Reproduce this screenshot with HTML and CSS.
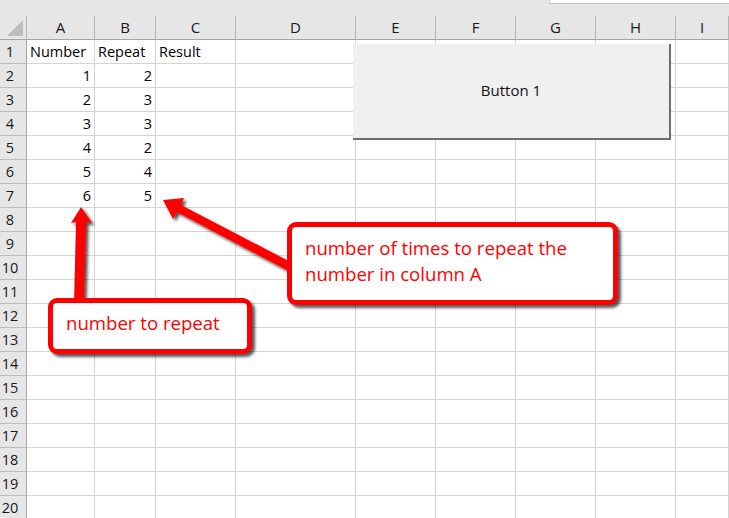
FILE: index.html
```html
<!DOCTYPE html>
<html>
<head>
<meta charset="utf-8">
<link rel="stylesheet" href="styles.css">
</head>
<body>
<div class="sheet">
  <div class="topbar"><div class="formula"></div></div>
  <div class="row head">
    <div class="corner"><svg class="corner-mark" width="26" height="23" viewBox="0 0 26 23"><polygon points="23,4 23,20 7,20" fill="#bdbdbd"/></svg></div>
    <div class="ch">A</div><div class="ch">B</div><div class="ch">C</div><div class="ch">D</div><div class="ch">E</div><div class="ch">F</div><div class="ch">G</div><div class="ch">H</div><div class="ch">I</div>
  </div>
  <div class="row"><div class="rh">1</div><div class="c">Number</div><div class="c">Repeat</div><div class="c">Result</div><div class="c"></div><div class="c"></div><div class="c"></div><div class="c"></div><div class="c"></div><div class="c"></div></div>
  <div class="row"><div class="rh">2</div><div class="c n">1</div><div class="c n">2</div><div class="c"></div><div class="c"></div><div class="c"></div><div class="c"></div><div class="c"></div><div class="c"></div><div class="c"></div></div>
  <div class="row"><div class="rh">3</div><div class="c n">2</div><div class="c n">3</div><div class="c"></div><div class="c"></div><div class="c"></div><div class="c"></div><div class="c"></div><div class="c"></div><div class="c"></div></div>
  <div class="row"><div class="rh">4</div><div class="c n">3</div><div class="c n">3</div><div class="c"></div><div class="c"></div><div class="c"></div><div class="c"></div><div class="c"></div><div class="c"></div><div class="c"></div></div>
  <div class="row"><div class="rh">5</div><div class="c n">4</div><div class="c n">2</div><div class="c"></div><div class="c"></div><div class="c"></div><div class="c"></div><div class="c"></div><div class="c"></div><div class="c"></div></div>
  <div class="row"><div class="rh">6</div><div class="c n">5</div><div class="c n">4</div><div class="c"></div><div class="c"></div><div class="c"></div><div class="c"></div><div class="c"></div><div class="c"></div><div class="c"></div></div>
  <div class="row"><div class="rh">7</div><div class="c n">6</div><div class="c n">5</div><div class="c"></div><div class="c"></div><div class="c"></div><div class="c"></div><div class="c"></div><div class="c"></div><div class="c"></div></div>
  <div class="row"><div class="rh">8</div><div class="c"></div><div class="c"></div><div class="c"></div><div class="c"></div><div class="c"></div><div class="c"></div><div class="c"></div><div class="c"></div><div class="c"></div></div>
  <div class="row"><div class="rh">9</div><div class="c"></div><div class="c"></div><div class="c"></div><div class="c"></div><div class="c"></div><div class="c"></div><div class="c"></div><div class="c"></div><div class="c"></div></div>
  <div class="row"><div class="rh">10</div><div class="c"></div><div class="c"></div><div class="c"></div><div class="c"></div><div class="c"></div><div class="c"></div><div class="c"></div><div class="c"></div><div class="c"></div></div>
  <div class="row"><div class="rh">11</div><div class="c"></div><div class="c"></div><div class="c"></div><div class="c"></div><div class="c"></div><div class="c"></div><div class="c"></div><div class="c"></div><div class="c"></div></div>
  <div class="row"><div class="rh">12</div><div class="c"></div><div class="c"></div><div class="c"></div><div class="c"></div><div class="c"></div><div class="c"></div><div class="c"></div><div class="c"></div><div class="c"></div></div>
  <div class="row"><div class="rh">13</div><div class="c"></div><div class="c"></div><div class="c"></div><div class="c"></div><div class="c"></div><div class="c"></div><div class="c"></div><div class="c"></div><div class="c"></div></div>
  <div class="row"><div class="rh">14</div><div class="c"></div><div class="c"></div><div class="c"></div><div class="c"></div><div class="c"></div><div class="c"></div><div class="c"></div><div class="c"></div><div class="c"></div></div>
  <div class="row"><div class="rh">15</div><div class="c"></div><div class="c"></div><div class="c"></div><div class="c"></div><div class="c"></div><div class="c"></div><div class="c"></div><div class="c"></div><div class="c"></div></div>
  <div class="row"><div class="rh">16</div><div class="c"></div><div class="c"></div><div class="c"></div><div class="c"></div><div class="c"></div><div class="c"></div><div class="c"></div><div class="c"></div><div class="c"></div></div>
  <div class="row"><div class="rh">17</div><div class="c"></div><div class="c"></div><div class="c"></div><div class="c"></div><div class="c"></div><div class="c"></div><div class="c"></div><div class="c"></div><div class="c"></div></div>
  <div class="row"><div class="rh">18</div><div class="c"></div><div class="c"></div><div class="c"></div><div class="c"></div><div class="c"></div><div class="c"></div><div class="c"></div><div class="c"></div><div class="c"></div></div>
  <div class="row"><div class="rh">19</div><div class="c"></div><div class="c"></div><div class="c"></div><div class="c"></div><div class="c"></div><div class="c"></div><div class="c"></div><div class="c"></div><div class="c"></div></div>
  <div class="row"><div class="rh">20</div><div class="c"></div><div class="c"></div><div class="c"></div><div class="c"></div><div class="c"></div><div class="c"></div><div class="c"></div><div class="c"></div><div class="c"></div></div>

  <div class="button">Button 1</div>

  <svg class="arrows" width="729" height="518" viewBox="0 0 729 518">
    <defs>
      <filter id="sh" x="-20%" y="-20%" width="140%" height="140%">
        <feDropShadow dx="2.5" dy="2.5" stdDeviation="1.6" flood-color="#000" flood-opacity="0.7"/>
      </filter>
    </defs>
    <polygon filter="url(#sh)" fill="#ff0000" points="163,200 184,198 181,205 302,268 298,276 177,212 173,219"/>
    <polygon filter="url(#sh)" fill="#ff0000" points="81,207 92,223 86,222 84,305 74,305 76,222 71,223"/>
  </svg>

  <div class="callout callout-times">number of times to repeat the<br>number in column A</div>
  <div class="callout callout-number">number to repeat</div>
</div>
</body>
</html>
```

FILE: styles.css
```css
html, body {
  margin: 0;
  padding: 0;
  background: #ffffff;
}
body {
  width: 729px;
  height: 518px;
  overflow: hidden;
  font-family: "Open Sans", "Noto Sans", sans-serif;
  color: #000;
}
.sheet {
  position: relative;
  width: 729px;
  height: 518px;
  overflow: hidden;
}
.topbar {
  height: 16px;
  background: #e6e6e6;
  display: flex;
  justify-content: flex-end;
  align-items: flex-start;
}
.formula {
  width: 179px;
  height: 3px;
  background: #ffffff;
  border-left: 1px solid #c6c6c6;
  border-bottom: 1px solid #c6c6c6;
}
.row {
  display: grid;
  grid-template-columns: 27px 68px 61px 80px 120px 80px 80px 80px 80px 1fr;
  height: 24px;
}
.row > div {
  box-sizing: border-box;
  height: 24px;
  line-height: 23px;
  white-space: nowrap;
  overflow: hidden;
}
.head {
  background: #e6e6e6;
}
.head > div {
  border-right: 1px solid #b4b4b4;
  border-bottom: 1px solid #a5a5a5;
  text-align: center;
  font-size: 15px;
  color: #1a1a1a;
}
.corner {
  display: flex;
}
.corner-mark {
  display: block;
  flex: 0 0 auto;
}
.rh {
  background: #e6e6e6;
  border-right: 1px solid #a8a8a8;
  border-bottom: 1px solid #bdbdbd;
  text-align: center;
  padding-right: 6px;
  font-size: 14.5px;
  color: #1a1a1a;
}
.c {
  border-right: 1px solid #d4d4d4;
  border-bottom: 1px solid #d4d4d4;
  font-size: 14.5px;
  padding: 0 3px 0 3px;
  color: #000;
}
.c.n {
  text-align: right;
}
.button {
  position: absolute;
  left: 353px;
  top: 44px;
  width: 316px;
  height: 92px;
  background: #f0f0f0;
  border-right: 2px solid #6e6e6e;
  border-bottom: 2px solid #6e6e6e;
  display: flex;
  align-items: center;
  justify-content: center;
  font-size: 15px;
  color: #111;
  padding-bottom: 2px;
  box-sizing: content-box;
}
.arrows {
  position: absolute;
  left: 0;
  top: 0;
}
.callout {
  position: absolute;
  box-sizing: border-box;
  background: #ffffff;
  border: 5px solid #ff0000;
  border-radius: 9px;
  box-shadow: 3px 3px 3px rgba(0, 0, 0, 0.65);
  color: #ff0000;
  font-size: 18.6px;
  line-height: 26px;
  padding-left: 13px;
  white-space: nowrap;
}
.callout-times {
  left: 287px;
  top: 222px;
  width: 331px;
  height: 83px;
  padding-top: 8px;
}
.callout-number {
  left: 48px;
  top: 298px;
  width: 204px;
  height: 56px;
  padding-top: 7px;
}
```
